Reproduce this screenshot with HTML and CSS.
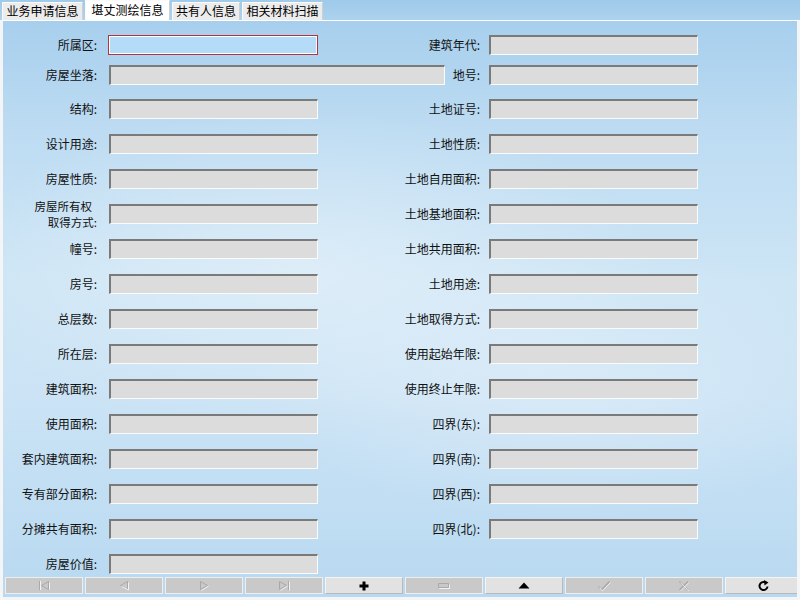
FILE: index.html
```html
<!DOCTYPE html>
<html lang="zh">
<head>
<meta charset="utf-8">
<title>堪丈测绘信息</title>
<link rel="stylesheet" href="styles.css">
</head>
<body>
<div class="tabs">
  <div class="tab t1">业务申请信息</div>
  <div class="tab t2 active">堪丈测绘信息</div>
  <div class="tab t3">共有人信息</div>
  <div class="tab t4">相关材料扫描</div>
</div>
<div class="panel">
  <div class="form">
    <label class="lab l">所属区:</label><div class="inp l focus"></div>
    <label class="lab r">建筑年代:</label><div class="inp r"></div>

    <label class="lab l">房屋坐落:</label><div class="inp wide"></div>
    <label class="lab rs">地号:</label><div class="inp r"></div>

    <label class="lab l">结构:</label><div class="inp l"></div>
    <label class="lab r">土地证号:</label><div class="inp r"></div>

    <label class="lab l">设计用途:</label><div class="inp l"></div>
    <label class="lab r">土地性质:</label><div class="inp r"></div>

    <label class="lab l">房屋性质:</label><div class="inp l"></div>
    <label class="lab r">土地自用面积:</label><div class="inp r"></div>

    <label class="lab l two"><span class="first">房屋所有权</span><span class="second">取得方式:</span></label><div class="inp l"></div>
    <label class="lab r">土地基地面积:</label><div class="inp r"></div>

    <label class="lab l">幢号:</label><div class="inp l"></div>
    <label class="lab r">土地共用面积:</label><div class="inp r"></div>

    <label class="lab l">房号:</label><div class="inp l"></div>
    <label class="lab r">土地用途:</label><div class="inp r"></div>

    <label class="lab l">总层数:</label><div class="inp l"></div>
    <label class="lab r">土地取得方式:</label><div class="inp r"></div>

    <label class="lab l">所在层:</label><div class="inp l"></div>
    <label class="lab r">使用起始年限:</label><div class="inp r"></div>

    <label class="lab l">建筑面积:</label><div class="inp l"></div>
    <label class="lab r">使用终止年限:</label><div class="inp r"></div>

    <label class="lab l">使用面积:</label><div class="inp l"></div>
    <label class="lab r">四界(东):</label><div class="inp r"></div>

    <label class="lab l">套内建筑面积:</label><div class="inp l"></div>
    <label class="lab r">四界(南):</label><div class="inp r"></div>

    <label class="lab l">专有部分面积:</label><div class="inp l"></div>
    <label class="lab r">四界(西):</label><div class="inp r"></div>

    <label class="lab l">分摊共有面积:</label><div class="inp l"></div>
    <label class="lab r">四界(北):</label><div class="inp r"></div>

    <label class="lab l">房屋价值:</label><div class="inp l"></div>
  </div>
  <div class="toolbar">
    <div class="btn dis"><svg width="14" height="11" viewBox="0 0 14 11"><g fill="none" stroke="#a9a9a9" stroke-width="1"><path d="M2.5 1v9M11.5 1.5L4.5 5.5L11.5 9.5Z"/></g><g fill="none" stroke="#f2f2f2" stroke-width="1"><path d="M3.5 1v9M12.5 2.5v7"/></g></svg></div>
    <div class="btn dis"><svg width="14" height="11" viewBox="0 0 14 11"><path d="M10.5 1.5L3.5 5.5L10.5 9.5Z" fill="none" stroke="#a9a9a9"/><path d="M11.5 2.5v7.5L4.5 6.5" fill="none" stroke="#f2f2f2"/></svg></div>
    <div class="btn dis"><svg width="14" height="11" viewBox="0 0 14 11"><path d="M3.5 1.5L10.5 5.5L3.5 9.5Z" fill="none" stroke="#a9a9a9"/><path d="M11.5 6L4.5 10.5" fill="none" stroke="#f2f2f2"/></svg></div>
    <div class="btn dis"><svg width="14" height="11" viewBox="0 0 14 11"><path d="M2.5 1.5L9.5 5.5L2.5 9.5Z M11.5 1v9" fill="none" stroke="#a9a9a9"/><path d="M12.5 1.5v9M10.5 6L3.5 10.5" fill="none" stroke="#f2f2f2"/></svg></div>
    <div class="btn en"><svg width="10" height="10" viewBox="0 0 10 10"><path d="M3.5 0.5h3v3h3v3h-3v3h-3v-3h-3v-3h3z" fill="#000"/></svg></div>
    <div class="btn dis"><svg width="14" height="8" viewBox="0 0 14 8"><path d="M1.5 1.5h10v4h-10z" fill="none" stroke="#a9a9a9"/><path d="M2.5 6.5h10v-4" fill="none" stroke="#f2f2f2"/></svg></div>
    <div class="btn en"><svg width="12" height="7" viewBox="0 0 12 7"><path d="M0.5 6.5L6 0.5L11.5 6.5Z" fill="#000"/></svg></div>
    <div class="btn dis"><svg width="14" height="12" viewBox="0 0 14 12"><path d="M1.5 6.5L4.5 10L12.5 1.5" fill="none" stroke="#a9a9a9" stroke-width="1.6"/><path d="M2.5 7.5L5.2 11L13.5 2.5" fill="none" stroke="#f2f2f2" stroke-width="1"/></svg></div>
    <div class="btn dis"><svg width="12" height="12" viewBox="0 0 12 12"><path d="M1.5 1.5L10 10M10 1.5L1.5 10" fill="none" stroke="#a9a9a9" stroke-width="1.6"/><path d="M2.5 2.5L11 11M11 2.5L2.5 11" fill="none" stroke="#f2f2f2" stroke-width="0.8"/></svg></div>
    <div class="btn en"><svg width="12" height="12" viewBox="0 0 12 12"><path d="M9.5 6.5A4 4 0 1 1 7 2.3" fill="none" stroke="#000" stroke-width="2"/><path d="M6 0L10.5 2.5L6.5 5.5Z" fill="#000"/></svg></div>
  </div>
</div>
</body>
</html>
```
FILE: styles.css
```css
* { box-sizing: border-box; }
html, body { margin: 0; padding: 0; }
body {
  width: 800px;
  height: 600px;
  overflow: hidden;
  font-family: "Noto Sans CJK SC", "DejaVu Sans", sans-serif;
  font-size: 12px;
  color: #000;
  background: #a9d0ee;
}
.tabs {
  height: 20px;
  display: flex;
  gap: 2px;
  padding-left: 2px;
  align-items: flex-end;
  background: linear-gradient(180deg, #9fcaea 0%, #acd2ee 100%);
}
.tab {
  height: 18px;
  background: #ececec;
  border: 1px solid #fafafa;
  border-bottom: none;
  border-right-color: #cfcfcf;
  text-align: center;
  line-height: 16px;
  font-size: 12px;
  white-space: nowrap;
}
.tab.active {
  height: 20px;
  background: #ffffff;
  line-height: 17px;
}
.t1 { width: 81px; }
.t2 { width: 85px; }
.t3 { width: 68px; }
.t4 { width: 81px; }

.panel {
  width: 800px;
  height: 580px;
  border-top: 1px solid #ffffff;
  border-left: 3px solid #f3f5f7;
  border-right: 3px solid #f3f5f7;
  border-bottom: 3px solid #f3f5f7;
  padding-top: 14px;
  overflow: hidden;
  background:
    radial-gradient(ellipse 360px 160px at 300px 250px, rgba(235,244,251,0.55), rgba(235,244,251,0) 100%),
    radial-gradient(ellipse 300px 140px at 560px 360px, rgba(230,241,250,0.5), rgba(230,241,250,0) 100%),
    linear-gradient(180deg, #a7cfed 0%, #bcdbf2 18%, #cde5f5 45%, #cbe3f5 65%, #b8d9f1 100%);
}
.form {
  display: grid;
  grid-template-columns: 94px 12px 209px 127px 35px 9px 209px;
  grid-template-rows: 30px 34px repeat(13, 35px) 23px;
  align-items: start;
}
.lab {
  height: 20px;
  line-height: 20px;
  text-align: right;
  white-space: nowrap;
  color: #111;
}
.lab.l { grid-column: 1; }
.lab.r { grid-column: 4 / 6; }
.lab.rs { grid-column: 5; }
.lab.two {
  height: 32px;
  display: flex;
  flex-direction: column;
  align-items: flex-end;
  line-height: 16px;
  margin-top: -6px;
}
.lab.two span { display: block; height: 16px; }
.lab.two .first { padding-right: 5px; font-size: 11.5px; }
.lab.two .second { font-size: 11.5px; }
.inp {
  height: 20px;
  background: #dcdcdc;
  border-style: solid;
  border-width: 2px 1px 1px 2px;
  border-color: #7a7a7a #fbfbfb #fbfbfb #7a7a7a;
}
.inp.l { grid-column: 3; }
.inp.r { grid-column: 7; }
.inp.wide { grid-column: 3 / 5; }
.inp.focus {
  margin-left: -1px;
  background: #b4dbf8;
  border: 1px solid #b03444;
  box-shadow: inset 0 0 0 1px #ffffff;
}
.toolbar {
  display: flex;
  gap: 2px;
  padding-left: 2px;
  height: 17px;
}
.btn {
  flex: 0 0 78px;
  height: 17px;
  display: flex;
  align-items: center;
  justify-content: center;
  border: 1px solid #eeeeee;
}
.btn.dis { background: #c9c9c9; }
.btn.en { background: #e2e2e2; border-color: #f4f4f4 #b9b9b9 #b9b9b9 #f4f4f4; }
```
